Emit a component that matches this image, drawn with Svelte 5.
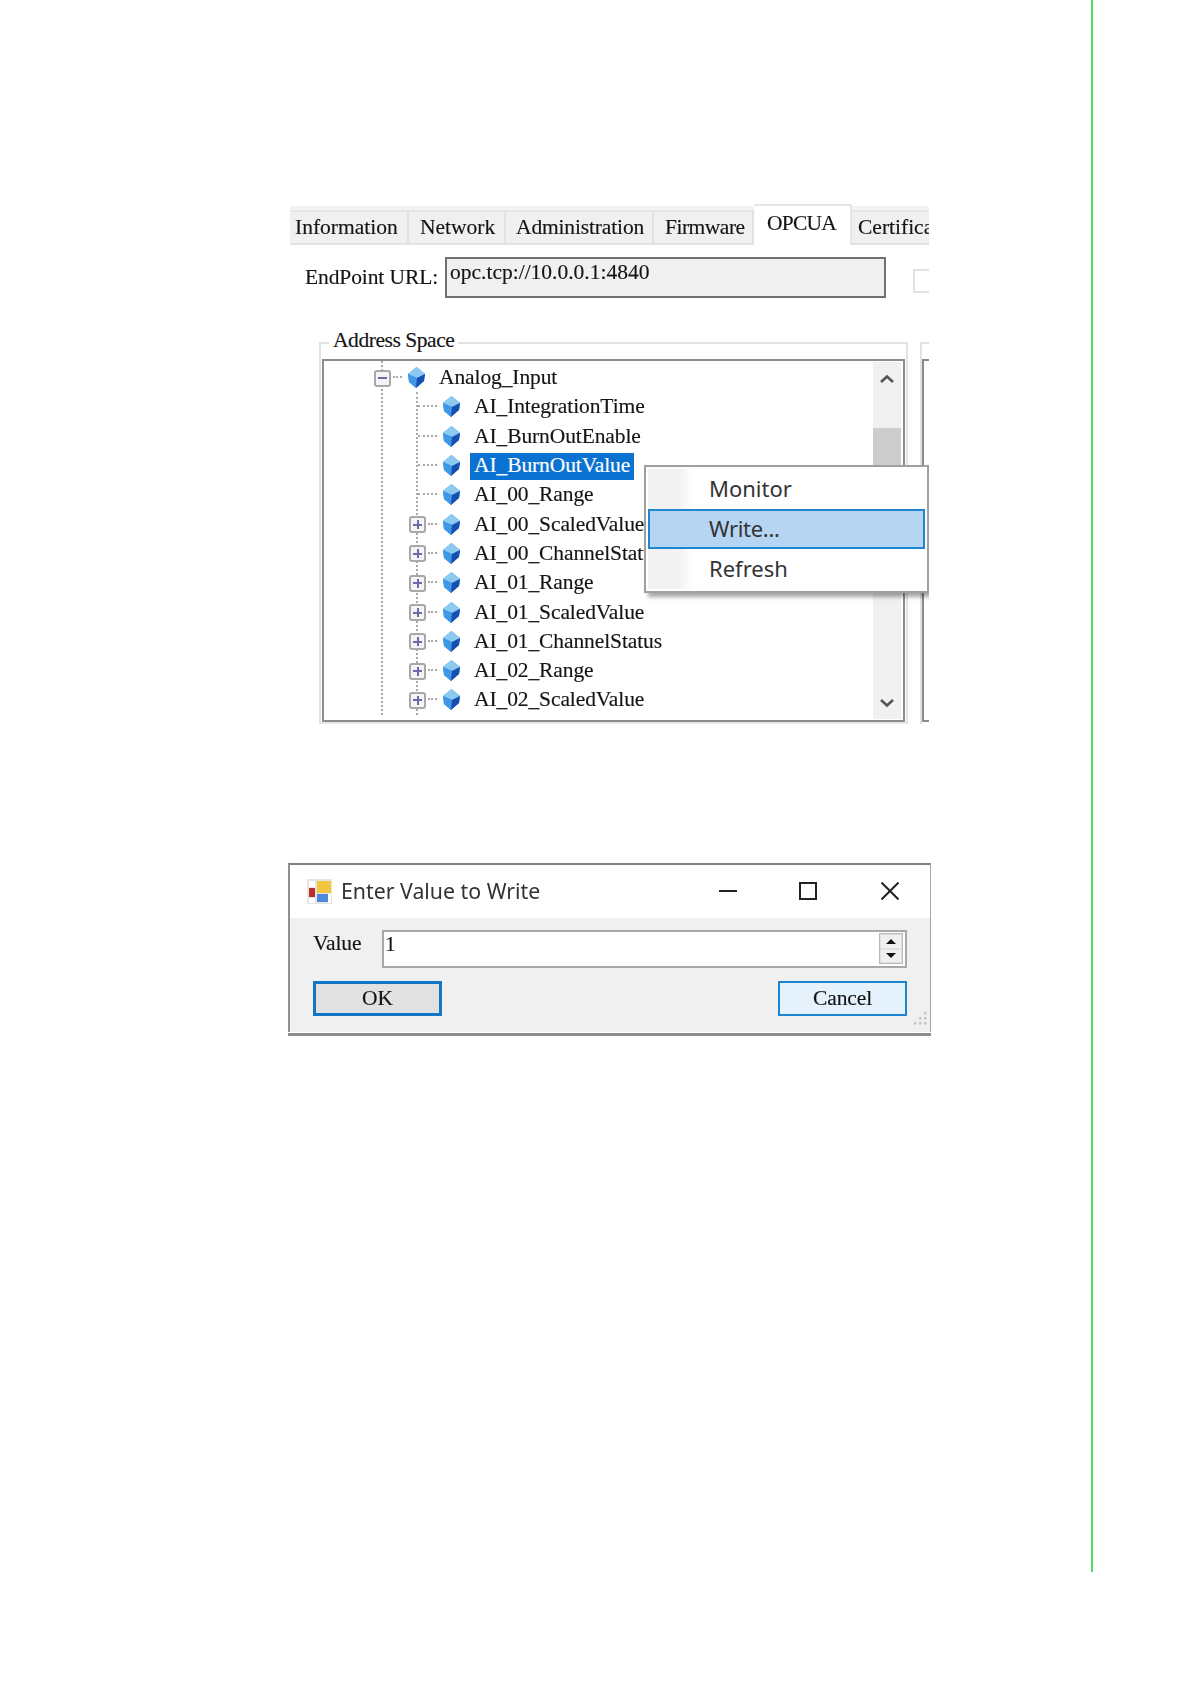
<script>
  const tabs = ['Information', 'Network', 'Administration', 'Firmware', 'OPCUA', 'Certificates'];
  const rows = [
    { label: 'AI_IntegrationTime', kind: 'leaf' },
    { label: 'AI_BurnOutEnable', kind: 'leaf' },
    { label: 'AI_BurnOutValue', kind: 'leaf', selected: true },
    { label: 'AI_00_Range', kind: 'leaf' },
    { label: 'AI_00_ScaledValue', kind: 'plus' },
    { label: 'AI_00_ChannelStatus', kind: 'plus' },
    { label: 'AI_01_Range', kind: 'plus' },
    { label: 'AI_01_ScaledValue', kind: 'plus' },
    { label: 'AI_01_ChannelStatus', kind: 'plus' },
    { label: 'AI_02_Range', kind: 'plus' },
    { label: 'AI_02_ScaledValue', kind: 'plus' }
  ];
</script>

{#snippet cube()}
  <svg class="cube" viewBox="0 0 17 21" aria-hidden="true">
    <polygon points="8.5,0 17,7 16,14 8,21 1,15 0,7" fill="#3f97e6" />
    <polygon points="8.5,0 17,7 9,11 0,7" fill="#8ccaf2" />
    <polygon points="0,7 9,11 8,21 1,15" fill="#3f97e6" />
    <polygon points="9,11 17,7 16,14 8,21" fill="#1550b0" />
  </svg>
{/snippet}

{#snippet box(sign)}
  <span class="box">
    <i class="h"></i>
    {#if sign === 'plus'}<i class="v"></i>{/if}
  </span>
{/snippet}

<div class="page">
  <section class="fig one">
    <div class="tabs">
      {#each tabs as t}
        <div class="tab" class:active={t === 'OPCUA'}>{t}</div>
      {/each}
    </div>

    <div class="endpoint">
      <span class="ep-label">EndPoint URL:</span>
      <div class="ep-input">opc.tcp://10.0.0.1:4840</div>
      <span class="check"></span>
    </div>

    <div class="groups">
      <div class="group">
        <span class="legend">Address Space</span>
        <div class="tree">
          <i class="guide g1"></i>
          <i class="guide g2"></i>
          <div class="row root">
            {@render box('minus')}
            <i class="conn short"></i>
            {@render cube()}
            <span class="label">Analog_Input</span>
          </div>
          {#each rows as r}
            <div class="row child">
              {#if r.kind === 'plus'}
                {@render box('plus')}
                <i class="conn short"></i>
              {:else}
                <i class="conn long"></i>
              {/if}
              {@render cube()}
              <span class="label" class:selected={r.selected}>{r.label}</span>
            </div>
          {/each}
          <div class="scrollbar">
            <svg class="arrow" viewBox="0 0 16 10" aria-hidden="true"><path d="M2 8 L8 2.5 L14 8" /></svg>
            <div class="thumb"></div>
            <svg class="arrow" viewBox="0 0 16 10" aria-hidden="true"><path d="M2 2 L8 7.5 L14 2" /></svg>
          </div>
        </div>
      </div>
      <div class="side"></div>

      <div class="menu">
        <div class="mi"><span>Monitor</span></div>
        <div class="mi hot"><span>Write...</span></div>
        <div class="mi"><span>Refresh</span></div>
      </div>
    </div>
  </section>

  <section class="fig two">
    <div class="titlebar">
      <svg class="appicon" viewBox="0 0 25 25" aria-hidden="true">
        <rect width="25" height="25" fill="#e4e4e4" />
        <rect x="2" y="2" width="6" height="6" fill="#fff" />
        <rect x="2" y="9" width="6" height="9" fill="#b8302a" />
        <rect x="2" y="19" width="6" height="5" fill="#fff" />
        <rect x="10" y="2" width="14" height="12" fill="#f3c63f" />
        <rect x="10" y="15" width="11" height="8" fill="#4f88dc" />
        <rect x="21" y="15" width="3" height="9" fill="#fff" />
      </svg>
      <span class="title">Enter Value to Write</span>
      <div class="winbtns">
        <svg viewBox="0 0 18 18" aria-hidden="true"><path d="M0 9 H18" /></svg>
        <svg viewBox="0 0 18 18" aria-hidden="true"><rect x="1" y="1" width="16" height="16" /></svg>
        <svg viewBox="0 0 18 18" aria-hidden="true"><path d="M0.5 0.5 L17.5 17.5 M17.5 0.5 L0.5 17.5" /></svg>
      </div>
    </div>
    <div class="dbody">
      <div class="valrow">
        <span class="vlabel">Value</span>
        <div class="vinput">
          <span>1</span>
          <div class="spin">
            <b><i class="up"></i></b>
            <b><i class="down"></i></b>
          </div>
        </div>
      </div>
      <div class="btns">
        <div class="btn ok">OK</div>
        <div class="btn cancel">Cancel</div>
      </div>
      <svg class="grip" viewBox="0 0 15 15" aria-hidden="true">
        <g fill="#c4c4c4">
          <rect x="11" y="1" width="2.5" height="2.5" />
          <rect x="6" y="6" width="2.5" height="2.5" />
          <rect x="11" y="6" width="2.5" height="2.5" />
          <rect x="1" y="11" width="2.5" height="2.5" />
          <rect x="6" y="11" width="2.5" height="2.5" />
          <rect x="11" y="11" width="2.5" height="2.5" />
        </g>
      </svg>
    </div>
  </section>
</div>

<style>
  :global(body) {
    margin: 0;
    background: #fff;
  }
  .page {
    box-sizing: border-box;
    width: 1093px;
    height: 1572px;
    border-right: 2px solid #4fe05a;
    padding: 204px 0 0 290px;
    font-family: "Liberation Serif", serif;
    color: #141414;
    -webkit-text-stroke: 0.15px #141414;
  }
  .fig {
    filter: blur(0.45px);
  }
  .one {
    width: 639px;
    height: 520px;
    overflow: hidden;
    position: relative;
  }
  .tabs {
    display: flex;
    align-items: flex-end;
    height: 39px;
    background: linear-gradient(#fff 0 2px, #f3f3f3 2px 6px, #e6e6e6 6px 8px, #f0f0f0 8px);
    border-bottom: 2px solid #e2e2e2;
    white-space: nowrap;
    font-size: 21.5px;
  }
  .tab {
    box-sizing: border-box;
    flex: none;
    height: 33px;
    line-height: 35px;
    border-right: 2px solid #e2e2e2;
  }
  .tab:nth-child(1) { width: 119px; padding-left: 5px; }
  .tab:nth-child(2) { width: 97px; padding-left: 11px; }
  .tab:nth-child(3) { width: 148px; padding-left: 10px; letter-spacing: -0.15px; }
  .tab:nth-child(4) { width: 100px; padding-left: 11px; letter-spacing: -0.5px; }
  .tab.active {
    width: 98px;
    height: 41px;
    line-height: 34px;
    background: #fff;
    border-top: 2px solid #e6e6e6;
    border-right-color: #e6e6e6;
    margin-bottom: -2px;
    padding: 0 0 7px 13px;
    letter-spacing: -0.8px;
  }
  .tab:last-child {
    padding-left: 6px;
    border: none;
  }
  .endpoint {
    display: flex;
    align-items: flex-start;
    padding: 12px 0 0 15px;
    box-sizing: border-box;
    height: 99px;
    font-size: 21.5px;
  }
  .ep-label {
    width: 140px;
    flex: none;
    line-height: 32px;
    margin-top: 4px;
    letter-spacing: -0.1px;
  }
  .ep-input {
    box-sizing: border-box;
    width: 442px;
    height: 41px;
    border: 2px solid #707070;
    background: #f0f0f0;
    padding-left: 3px;
    line-height: 27px;
  }
  .check {
    box-sizing: border-box;
    width: 16px;
    height: 24px;
    margin: 12px 0 0 27px;
    border: 2px solid #e2e2e2;
    border-right: none;
  }
  .groups {
    display: flex;
    position: absolute;
    left: 29px;
    top: 138px;
    right: 0;
    bottom: 0;
  }
  .group {
    position: relative;
    box-sizing: border-box;
    width: 589px;
    height: 382px;
    border: 2px solid #e2e2e2;
    border-bottom: 2px solid #e8e8e8;
    padding: 15px 1px 0 1px;
    flex: none;
  }
  .legend {
    position: absolute;
    left: 8px;
    top: -18px;
    padding: 0 4px;
    background: #fff;
    font-size: 21.5px;
    line-height: 28px;
    letter-spacing: -0.45px;
  }
  .side {
    box-sizing: border-box;
    width: 20px;
    height: 382px;
    margin-left: 12px;
    border: 2px solid #e2e2e2;
    border-right: none;
    border-bottom: none;
    position: relative;
  }
  .side::after {
    content: "";
    position: absolute;
    left: 0;
    top: 15px;
    width: 100%;
    height: 363px;
    border: 2px solid #8a8a8a;
    border-right: none;
    box-sizing: border-box;
  }
  .tree {
    position: relative;
    box-sizing: border-box;
    width: 583px;
    height: 363px;
    border: 2px solid #8c8c8c;
    padding-top: 3px;
    background: #fff;
    overflow: hidden;
  }
  .guide {
    position: absolute;
    top: 0;
    bottom: 5px;
    border-left: 2px dotted #a8a8a8;
  }
  .g1 { left: 57px; }
  .g2 { left: 92px; top: 31px; }
  .row {
    display: flex;
    align-items: center;
    height: 29.3px;
    position: relative;
    font-size: 21.5px;
    letter-spacing: -0.1px;
  }
  .root { padding-left: 50px; }
  .child { padding-left: 85px; }
  .box {
    position: relative;
    box-sizing: border-box;
    flex: none;
    width: 17px;
    height: 17px;
    margin-top: -1px;
    border: 2px solid #a8a8a8;
    border-radius: 3px;
    background: #f4f4f6;
  }
  .box .h, .box .v {
    position: absolute;
    background: #6a6aa8;
  }
  .box .h { left: 2px; right: 2px; top: 5.5px; height: 2px; }
  .box .v { top: 2px; bottom: 2px; left: 5.5px; width: 2px; }
  .conn {
    display: block;
    flex: none;
    border-top: 2px dotted #a8a8a8;
    height: 0;
    margin-top: -3px;
  }
  .conn.short { width: 9px; margin-left: 2px; margin-right: 3px; }
  .conn.long { width: 19px; margin-left: 9px; margin-right: 3px; }
  .cube {
    flex: none;
    width: 17px;
    height: 21px;
    margin: -2px 0 0 2.5px;
  }
  .label {
    margin-left: 10.5px;
    padding: 0 4px;
    height: 27px;
    line-height: 25px;
    white-space: nowrap;
  }
  .selected {
    background: #0a72d0;
    color: #fff;
    -webkit-text-stroke: 0.15px #fff;
  }
  .scrollbar {
    position: absolute;
    right: 2px;
    top: 1px;
    bottom: 1px;
    width: 28px;
    background: #f0f0f0;
    display: flex;
    flex-direction: column;
    align-items: center;
  }
  .arrow {
    width: 16px;
    height: 10px;
    margin: 12px 0 11px;
    flex: none;
    fill: none;
    stroke: #555;
    stroke-width: 2.6;
  }
  .thumb {
    width: 100%;
    height: 70px;
    margin: 33px 0 auto;
    background: #cdcdcd;
  }
  .menu {
    position: absolute;
    left: 325px;
    top: 123px;
    box-sizing: border-box;
    width: 285px;
    height: 128px;
    padding: 2px;
    background: #fff;
    border: 2px solid #a0a0a0;
    box-shadow: 4px 4px 4px rgba(0,0,0,.35);
    font-family: "Noto Sans", sans-serif;
    font-size: 22px;
    color: #333;
    -webkit-text-stroke: 0;
  }
  .mi {
    position: relative;
    box-sizing: border-box;
    height: 40px;
    padding-left: 61px;
    line-height: 38px;
    background: linear-gradient(90deg, #f2f2f2 0, #f2f2f2 30px, #fff 46px);
  }
  .mi.hot {
    background: #b5d5f2;
    border: 2px solid #1f86d6;
    padding-left: 59px;
    line-height: 34px;
    letter-spacing: -0.3px;
  }
  .two {
    box-sizing: border-box;
    width: 643px;
    height: 173px;
    margin: 139px 0 0 -2px;
    background: #f0f0f0;
    border: 2px solid #909090;
    border-top: 2px solid #808080;
    border-bottom: none;
    border-right: 1px solid #a8a8a8;
    position: relative;
  }
  .two::after {
    content: "";
    position: absolute;
    left: -2px;
    right: -1px;
    bottom: 0;
    height: 3px;
    border-top: 1px solid #fff;
    background: #8c8c8c;
  }
  .titlebar {
    display: flex;
    align-items: center;
    height: 53px;
    background: #fff;
    padding-left: 17px;
  }
  .appicon {
    flex: none;
    width: 25px;
    height: 25px;
  }
  .title {
    margin: -3px 0 0 9px;
    font-family: "Noto Sans", sans-serif;
    font-size: 21.3px;
    color: #333;
    -webkit-text-stroke: 0;
  }
  .winbtns {
    margin: -2px 0 0 auto;
    display: flex;
    gap: 62px;
    padding-right: 31px;
  }
  .winbtns svg {
    width: 18px;
    height: 18px;
    fill: none;
    stroke: #222;
    stroke-width: 2;
  }
  .winbtns svg:last-child {
    margin-left: 2px;
  }
  .dbody {
    position: relative;
    padding: 12px 23px 0 23px;
  }
  .valrow {
    display: flex;
    align-items: flex-start;
    font-size: 21.5px;
  }
  .vlabel {
    width: 70px;
    flex: none;
    line-height: 27px;
    margin-left: -1px;
    padding-left: 1px;
    box-sizing: border-box;
    letter-spacing: -0.1px;
  }
  .vinput {
    flex: 1;
    box-sizing: border-box;
    height: 38px;
    border: 2px solid #a8a8a8;
    background: #fff;
    padding-left: 1px;
    line-height: 24px;
    display: flex;
    justify-content: space-between;
  }
  .spin {
    display: flex;
    flex-direction: column;
    width: 24px;
    height: 31px;
    margin: 1px 2px 0 0;
    border: 1px solid #b8b8b8;
    box-sizing: border-box;
  }
  .spin b {
    flex: 1;
    display: flex;
    align-items: center;
    justify-content: center;
    background: #f0f0f0;
    border: 1px solid #e0e0e0;
  }
  .spin i {
    width: 0;
    height: 0;
    border-left: 5px solid transparent;
    border-right: 5px solid transparent;
  }
  .up { border-bottom: 5px solid #111; }
  .down { border-top: 5px solid #111; }
  .btns {
    display: flex;
    justify-content: space-between;
    margin-top: 13px;
  }
  .btn {
    box-sizing: border-box;
    width: 129px;
    height: 35px;
    text-align: center;
    font-size: 21.5px;
    line-height: 29px;
    letter-spacing: -0.1px;
  }
  .ok {
    background: #e1e1e1;
    border: 3px solid #1176c8;
  }
  .cancel {
    background: #e5f1fb;
    border: 2px solid #1c84d0;
    line-height: 31px;
  }
  .grip {
    position: absolute;
    right: 2px;
    bottom: -10px;
    width: 15px;
    height: 15px;
  }
</style>
